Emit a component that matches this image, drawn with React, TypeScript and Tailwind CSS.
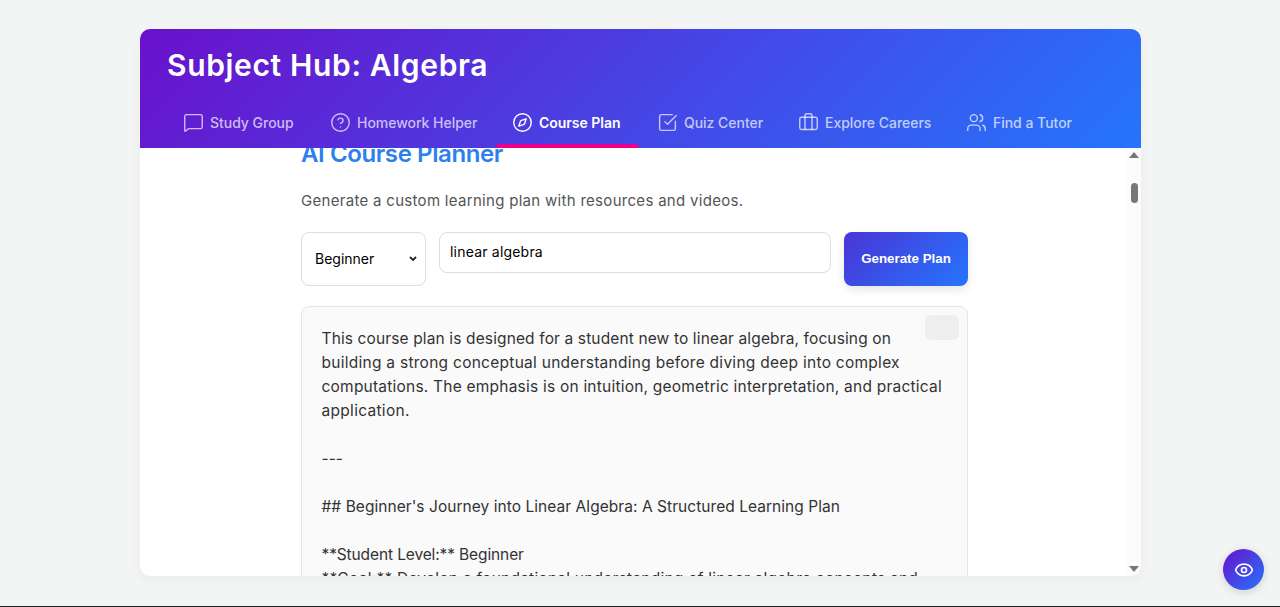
import React from "react";
import { MessageSquare, CircleHelp, Compass, SquareCheckBig, Briefcase, Users, Eye } from "lucide-react";

const font = { fontFamily: '"Inter", "Noto Sans", sans-serif' };

const tabs = [
  { label: "Study Group", Icon: MessageSquare, w: "w-[143px]" },
  { label: "Homework Helper", Icon: CircleHelp, w: "w-[178px]" },
  { label: "Course Plan", Icon: Compass, w: "w-[141px]", active: true },
  { label: "Quiz Center", Icon: SquareCheckBig, w: "w-[137px]" },
  { label: "Explore Careers", Icon: Briefcase, w: "w-[164px]" },
  { label: "Find a Tutor", Icon: Users, w: "w-[140px]" },
];

const lines = [
  { t: "This course plan is designed for a student new to linear algebra, focusing on", c: "tracking-[0.13px]" },
  { t: "building a strong conceptual understanding before diving deep into complex", c: "tracking-[0.27px]" },
  { t: "computations. The emphasis is on intuition, geometric interpretation, and practical", c: "tracking-[0.22px]" },
  { t: "application.", c: "tracking-[0.3px]" },
  { t: "\u00a0", c: "" },
  { t: "---", c: "" },
  { t: "\u00a0", c: "" },
  { t: "## Beginner's Journey into Linear Algebra: A Structured Learning Plan", c: "tracking-[0.05px]" },
  { t: "\u00a0", c: "" },
  { t: "**Student Level:** Beginner", c: "tracking-[-0.12px]" },
  { t: "**Goal:** Develop a foundational understanding of linear algebra concepts and", c: "tracking-[0.23px]" },
];

export default function App() {
  return (
    <div className="h-[607px] overflow-hidden bg-[#f3f5f5] border-b border-[#222] relative" style={font}>
      <div className="mx-[140px] pt-[29px] w-[1001px] h-[576px]">
        <div className="h-full flex flex-col rounded-[10px] overflow-hidden bg-white shadow-[0_4px_12px_rgba(0,0,0,0.04)]">
          <header className="h-[119px] shrink-0 flex flex-col bg-[linear-gradient(135deg,#6a11cb,#2575fc)] relative z-10">
            <h1 className="pl-[27px] pt-[15px] h-[74px] text-[30px] leading-[42px] font-semibold text-white tracking-[0.65px]">
              Subject Hub: Algebra
            </h1>
            <nav className="flex gap-[4px] pl-[28px] h-[45px]">
              {tabs.map(({ label, Icon, w, active }) => (
                <div
                  key={label}
                  className={`${w} h-[45px] flex items-center gap-[6px] pl-[15px] pb-[2px] text-[14px] border-b-4 tracking-[-0.03px] ${
                    active
                      ? "border-[#ec008c] text-white font-semibold"
                      : "border-transparent text-white/70 font-medium"
                  }`}
                >
                  <Icon size={21} strokeWidth={1.6} />
                  <span className="whitespace-nowrap">{label}</span>
                </div>
              ))}
            </nav>
          </header>
          <div className="flex-1 flex min-h-0">
            <div className="flex-1 overflow-hidden">
              <div className="ml-[161px] w-[667px] -mt-[10px]">
                <h2 className="text-[24px] leading-[32px] font-semibold text-[#2d7ff0] tracking-[-0.4px]">AI Course Planner</h2>
                <p className="mt-[19px] text-[15px] leading-[24px] text-[#555] tracking-[0.3px]">
                  Generate a custom learning plan with resources and videos.
                </p>
                <div className="mt-[19px] flex gap-[13px]">
                  <div className="w-[125px] h-[54px] shrink-0 rounded-[8px] border border-[#ddd] bg-white flex items-center justify-between pl-[13px] pr-[4px] pb-[2px] text-[14px] text-black">
                    <span>Beginner</span>
                    <svg width="16" height="16" viewBox="0 0 16 16" fill="none" stroke="#222" strokeWidth="1.8">
                      <path d="M5 7l3 3 3-3" />
                    </svg>
                  </div>
                  <div className="flex-1 h-[41px] rounded-[8px] border border-[#ddd] bg-white flex items-center pl-[10px] pb-[2px] text-[14px] text-black tracking-[0.2px]">
                    linear algebra
                  </div>
                  <button
                    className="w-[124px] h-[54px] shrink-0 rounded-[8px] bg-[linear-gradient(135deg,#4a35d6,#2575fc)] text-white text-[13.33px] font-bold shadow-[0_4px_10px_rgba(0,0,0,0.1)]"
                    style={{ fontFamily: '"Liberation Sans", Arial, sans-serif' }}
                  >
                    Generate Plan
                  </button>
                </div>
                <div className="relative mt-[20px] rounded-[8px] border border-[#e5e5e5] bg-[#fafafa] pt-[20px] pl-[19.5px] pr-[20px] text-[15.5px] leading-[24px] text-[#333]">
                  <div className="absolute right-[8px] top-[8px] w-[34px] h-[25px] rounded-[6px] bg-[#eeeeee]" />
                  {lines.map((l, i) => (
                    <div key={i} className={`whitespace-nowrap ${l.c}`}>{l.t}</div>
                  ))}
                </div>
              </div>
            </div>
            <div className="w-[15px] shrink-0 bg-[#fbfbfb] flex flex-col items-center pt-[4px] pb-[4px] pl-[1px]">
              <div className="w-0 h-0 border-x-[5px] border-x-transparent border-b-[6px] border-b-[#777]" />
              <div className="mt-[25px] w-[7px] h-[20px] rounded-[4px] bg-[#777]" />
              <div className="flex-1" />
              <div className="w-0 h-0 border-x-[5px] border-x-transparent border-t-[6px] border-t-[#777]" />
            </div>
          </div>
        </div>
      </div>
      <button className="absolute left-[1223px] top-[549px] w-[41px] h-[41px] rounded-full bg-[linear-gradient(135deg,#6a11cb,#2575fc)] flex items-center justify-center text-white shadow-[0_2px_8px_rgba(0,0,0,0.15)]">
        <Eye size={20} strokeWidth={2} />
      </button>
    </div>
  );
}
